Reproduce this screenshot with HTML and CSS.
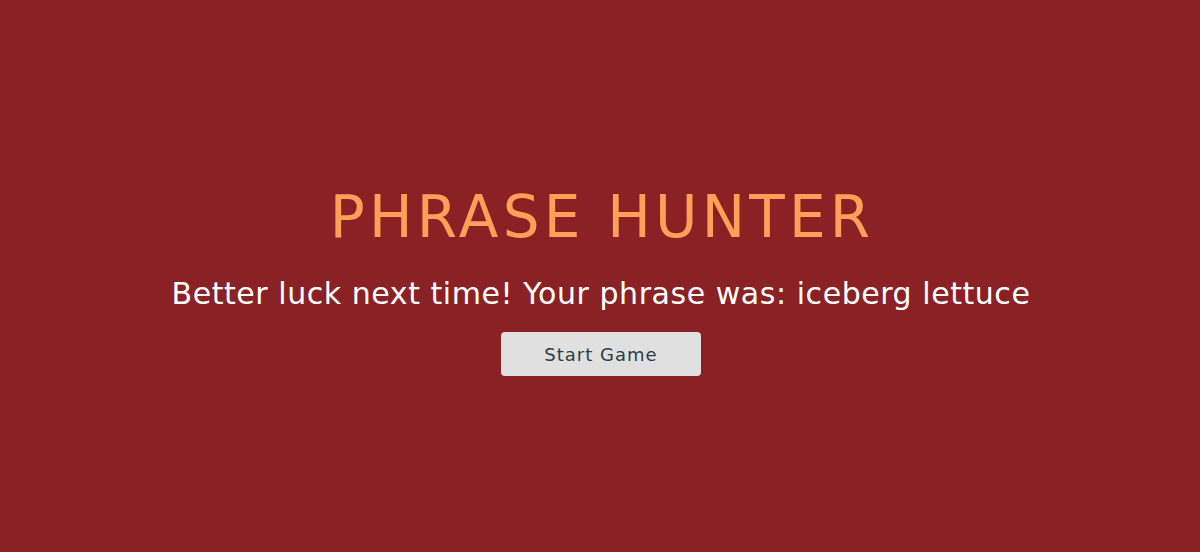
FILE: index.html
```html
<!DOCTYPE html>
<html>
<head>
<meta charset="utf-8">
<link rel="stylesheet" href="styles.css">
</head>
<body>
<div class="overlay">
  <h2 class="title">PHRASE HUNTER</h2>
  <h1 class="message">Better luck next time! Your phrase was: iceberg lettuce</h1>
  <button class="btn-reset">Start Game</button>
</div>
</body>
</html>
```
FILE: styles.css
```css
html, body {
  margin: 0;
  padding: 0;
  height: 100%;
}
body {
  background: #8a2225;
  font-family: "DejaVu Sans", "Open Sans", sans-serif;
}
.overlay {
  height: 552px;
  box-sizing: border-box;
  display: flex;
  flex-direction: column;
  align-items: center;
  justify-content: center;
  padding-top: 9px;
}
.title {
  margin: 0;
  color: #ff9f59;
  font-weight: 400;
  font-size: 58px;
  line-height: 64px;
  letter-spacing: 4.2px;
  text-indent: 4px;
}
.message {
  margin: 25px 0 0;
  color: #ffffff;
  font-weight: 400;
  font-size: 30px;
  line-height: 40px;
  letter-spacing: 0.55px;
  text-indent: 2px;
}
.btn-reset {
  margin-top: 18px;
  width: 200px;
  height: 44px;
  border: none;
  border-radius: 4px;
  background: #e0e0e0;
  color: #2f3d45;
  font-family: "DejaVu Sans", sans-serif;
  font-size: 18px;
  letter-spacing: 1px;
  transform: translateX(1px);
}
```
